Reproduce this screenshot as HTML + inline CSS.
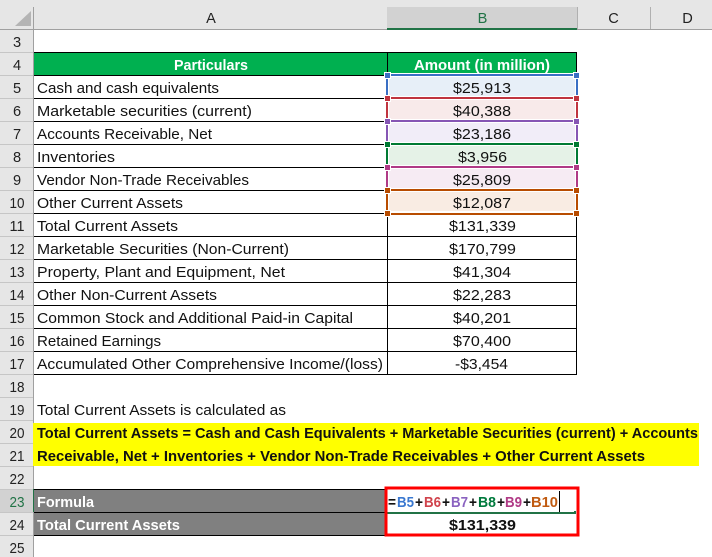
<!DOCTYPE html>
<html><head><meta charset="utf-8"><style>
html,body{margin:0;padding:0;background:#fff;width:712px;height:557px;overflow:hidden}
svg{display:block}
text{font-family:"Liberation Sans",sans-serif;font-size:14.6px;fill:#111}
.b{font-weight:700}
.w{fill:#fff;font-weight:700}
.h{fill:#222;text-anchor:middle}
</style></head><body>
<svg xmlns="http://www.w3.org/2000/svg" width="712" height="557" viewBox="0 0 712 557" shape-rendering="crispEdges">
<!-- headers -->
<rect x="0" y="0" width="712" height="29" fill="#e6e6e6"/>
<rect x="0" y="0" width="33" height="557" fill="#e6e6e6"/>
<rect x="387" y="7" width="190" height="21" fill="#d2d2d2"/>
<rect x="0" y="29" width="712" height="1" fill="#a0a0a0"/>
<rect x="387" y="28" width="190" height="2" fill="#217346"/>
<rect x="33" y="7" width="1" height="550" fill="#a0a0a0"/>
<rect x="650" y="7" width="1" height="22" fill="#b0b0b0"/>
<rect x="577" y="7" width="1" height="22" fill="#b0b0b0"/>
<polygon points="31,11 31,26 15,26" fill="#b4b4b4" shape-rendering="auto"/>
<rect x="0" y="489" width="33" height="23" fill="#d2d2d2"/>
<rect x="33" y="489" width="2" height="23" fill="#217346"/>
<g fill="#c6c6c6">
<rect x="0" y="52" width="33" height="1"/><rect x="0" y="75" width="33" height="1"/><rect x="0" y="98" width="33" height="1"/><rect x="0" y="121" width="33" height="1"/><rect x="0" y="144" width="33" height="1"/><rect x="0" y="167" width="33" height="1"/><rect x="0" y="190" width="33" height="1"/><rect x="0" y="213" width="33" height="1"/><rect x="0" y="236" width="33" height="1"/><rect x="0" y="259" width="33" height="1"/><rect x="0" y="282" width="33" height="1"/><rect x="0" y="305" width="33" height="1"/><rect x="0" y="328" width="33" height="1"/><rect x="0" y="351" width="33" height="1"/><rect x="0" y="374" width="33" height="1"/><rect x="0" y="397" width="33" height="1"/><rect x="0" y="420" width="33" height="1"/><rect x="0" y="443" width="33" height="1"/><rect x="0" y="466" width="33" height="1"/><rect x="0" y="489" width="33" height="1"/><rect x="0" y="512" width="33" height="1"/><rect x="0" y="535" width="33" height="1"/>
</g>
<g shape-rendering="auto">
<text class="h" x="211" y="23">A</text><text class="h" x="482.5" y="23" style="fill:#217346">B</text><text class="h" x="613.5" y="23">C</text><text class="h" x="687.5" y="23">D</text>
<text class="h" x="17" y="47">3</text><text class="h" x="17" y="70">4</text><text class="h" x="17" y="93">5</text><text class="h" x="17" y="116">6</text><text class="h" x="17" y="139">7</text><text class="h" x="17" y="162">8</text><text class="h" x="17" y="185">9</text>
<text class="h" x="17" y="208" textLength="15" lengthAdjust="spacingAndGlyphs">10</text><text class="h" x="17" y="231" textLength="15" lengthAdjust="spacingAndGlyphs">11</text><text class="h" x="17" y="254" textLength="15" lengthAdjust="spacingAndGlyphs">12</text><text class="h" x="17" y="277" textLength="15" lengthAdjust="spacingAndGlyphs">13</text><text class="h" x="17" y="300" textLength="15" lengthAdjust="spacingAndGlyphs">14</text><text class="h" x="17" y="323" textLength="15" lengthAdjust="spacingAndGlyphs">15</text><text class="h" x="17" y="346" textLength="15" lengthAdjust="spacingAndGlyphs">16</text><text class="h" x="17" y="369" textLength="15" lengthAdjust="spacingAndGlyphs">17</text><text class="h" x="17" y="392" textLength="15" lengthAdjust="spacingAndGlyphs">18</text><text class="h" x="17" y="415" textLength="15" lengthAdjust="spacingAndGlyphs">19</text><text class="h" x="17" y="438" textLength="15" lengthAdjust="spacingAndGlyphs">20</text><text class="h" x="17" y="461" textLength="15" lengthAdjust="spacingAndGlyphs">21</text><text class="h" x="17" y="484" textLength="15" lengthAdjust="spacingAndGlyphs">22</text><text class="h" x="17" y="507" textLength="15" lengthAdjust="spacingAndGlyphs" style="fill:#217346">23</text><text class="h" x="17" y="530" textLength="15" lengthAdjust="spacingAndGlyphs">24</text><text class="h" x="17" y="553" textLength="15" lengthAdjust="spacingAndGlyphs">25</text>
</g>
<!-- table -->
<rect x="34" y="52" width="543" height="23" fill="#00b050"/>
<g fill="#000">
<rect x="34" y="52" width="543" height="1"/><rect x="34" y="75" width="543" height="1"/><rect x="34" y="98" width="543" height="1"/><rect x="34" y="121" width="543" height="1"/><rect x="34" y="144" width="543" height="1"/><rect x="34" y="167" width="543" height="1"/><rect x="34" y="190" width="543" height="1"/><rect x="34" y="213" width="543" height="1"/><rect x="34" y="236" width="543" height="1"/><rect x="34" y="259" width="543" height="1"/><rect x="34" y="282" width="543" height="1"/><rect x="34" y="305" width="543" height="1"/><rect x="34" y="328" width="543" height="1"/><rect x="34" y="351" width="543" height="1"/><rect x="34" y="374" width="543" height="1"/>
<rect x="387" y="52" width="1" height="322"/><rect x="576" y="52" width="1" height="323"/>
</g>
<!-- coloured reference boxes -->
<g>
<rect x="385" y="73" width="194" height="142" fill="#fff"/>
<rect x="389" y="77" width="186" height="19" fill="#e7eff8"/>
<rect x="389" y="100" width="186" height="19" fill="#f8eaea"/>
<rect x="389" y="123" width="186" height="19" fill="#f1edf8"/>
<rect x="389" y="146" width="186" height="19" fill="#e5f2e7"/>
<rect x="389" y="169" width="186" height="19" fill="#f6ebf3"/>
<rect x="389" y="192" width="186" height="19" fill="#f9ece3"/>
<rect x="386" y="75" width="2" height="23" fill="#3a6fc4"/><rect x="576" y="75" width="2" height="23" fill="#3a6fc4"/>
<rect x="386" y="98" width="2" height="23" fill="#c0343f"/><rect x="576" y="98" width="2" height="23" fill="#c0343f"/>
<rect x="386" y="121" width="2" height="23" fill="#8656b4"/><rect x="576" y="121" width="2" height="23" fill="#8656b4"/>
<rect x="386" y="144" width="2" height="23" fill="#007a33"/><rect x="576" y="144" width="2" height="23" fill="#007a33"/>
<rect x="386" y="167" width="2" height="23" fill="#b03a86"/><rect x="576" y="167" width="2" height="23" fill="#b03a86"/>
<rect x="386" y="190" width="2" height="23" fill="#b84c00"/><rect x="576" y="190" width="2" height="23" fill="#b84c00"/>
<rect x="387" y="74" width="190" height="2" fill="#3a6fc4"/>
<rect x="387" y="97" width="190" height="2" fill="#c0343f"/>
<rect x="387" y="120" width="190" height="2" fill="#8656b4"/>
<rect x="387" y="143" width="190" height="2" fill="#007a33"/>
<rect x="387" y="166" width="190" height="2" fill="#b03a86"/>
<rect x="387" y="189" width="190" height="2" fill="#b84c00"/>
<rect x="387" y="213" width="190" height="2" fill="#b84c00"/>
<g stroke="#fff" stroke-width="1">
<rect x="384.5" y="72.5" width="6" height="6" fill="#3a6fc4"/><rect x="573.5" y="72.5" width="6" height="6" fill="#3a6fc4"/>
<rect x="384.5" y="95.5" width="6" height="6" fill="#c0343f"/><rect x="573.5" y="95.5" width="6" height="6" fill="#c0343f"/>
<rect x="384.5" y="118.5" width="6" height="6" fill="#8656b4"/><rect x="573.5" y="118.5" width="6" height="6" fill="#8656b4"/>
<rect x="384.5" y="141.5" width="6" height="6" fill="#007a33"/><rect x="573.5" y="141.5" width="6" height="6" fill="#007a33"/>
<rect x="384.5" y="164.5" width="6" height="6" fill="#b03a86"/><rect x="573.5" y="164.5" width="6" height="6" fill="#b03a86"/>
<rect x="384.5" y="187.5" width="6" height="6" fill="#b84c00"/><rect x="573.5" y="187.5" width="6" height="6" fill="#b84c00"/>
<rect x="384.5" y="210.5" width="6" height="6" fill="#b84c00"/><rect x="573.5" y="210.5" width="6" height="6" fill="#b84c00"/>
</g>
</g>
<!-- yellow -->
<rect x="33" y="423" width="666" height="43" fill="#ffff00"/>
<!-- grey formula -->
<rect x="34" y="489" width="352" height="46" fill="#808080"/>
<rect x="34" y="489" width="352" height="1" fill="#000"/><rect x="34" y="512" width="352" height="1" fill="#000"/><rect x="34" y="535" width="352" height="1" fill="#000"/>
<rect x="387" y="512" width="188" height="2" fill="#217346"/><rect x="574" y="511" width="2" height="3" fill="#217346"/>
<rect x="559" y="491" width="1" height="21" fill="#000"/>
<rect x="386" y="488" width="192" height="47" fill="none" stroke="#ff0000" stroke-width="3"/>
<g shape-rendering="auto">
<text class="w" x="174" y="70" textLength="74" lengthAdjust="spacingAndGlyphs">Particulars</text>
<text class="w" x="414" y="70" textLength="136" lengthAdjust="spacingAndGlyphs">Amount (in million)</text>
<text x="37" y="93" textLength="182" lengthAdjust="spacingAndGlyphs">Cash and cash equivalents</text>
<text x="37" y="116" textLength="215" lengthAdjust="spacingAndGlyphs">Marketable securities (current)</text>
<text x="37" y="139" textLength="175" lengthAdjust="spacingAndGlyphs">Accounts Receivable, Net</text>
<text x="37" y="162" textLength="78" lengthAdjust="spacingAndGlyphs">Inventories</text>
<text x="37" y="185" textLength="212" lengthAdjust="spacingAndGlyphs">Vendor Non-Trade Receivables</text>
<text x="37" y="208" textLength="146" lengthAdjust="spacingAndGlyphs">Other Current Assets</text>
<text x="37" y="231" textLength="141" lengthAdjust="spacingAndGlyphs">Total Current Assets</text>
<text x="37" y="254" textLength="252" lengthAdjust="spacingAndGlyphs">Marketable Securities (Non-Current)</text>
<text x="37" y="277" textLength="248" lengthAdjust="spacingAndGlyphs">Property, Plant and Equipment, Net</text>
<text x="37" y="300" textLength="180" lengthAdjust="spacingAndGlyphs">Other Non-Current Assets</text>
<text x="37" y="323" textLength="316" lengthAdjust="spacingAndGlyphs">Common Stock and Additional Paid-in Capital</text>
<text x="37" y="346" textLength="124" lengthAdjust="spacingAndGlyphs">Retained Earnings</text>
<text x="37" y="369" textLength="346" lengthAdjust="spacingAndGlyphs">Accumulated Other Comprehensive Income/(loss)</text>
<text x="453" y="93" textLength="58" lengthAdjust="spacingAndGlyphs">$25,913</text>
<text x="453" y="116" textLength="58" lengthAdjust="spacingAndGlyphs">$40,388</text>
<text x="453" y="139" textLength="58" lengthAdjust="spacingAndGlyphs">$23,186</text>
<text x="458" y="162" textLength="49" lengthAdjust="spacingAndGlyphs">$3,956</text>
<text x="453" y="185" textLength="58" lengthAdjust="spacingAndGlyphs">$25,809</text>
<text x="453" y="208" textLength="58" lengthAdjust="spacingAndGlyphs">$12,087</text>
<text x="449" y="231" textLength="67" lengthAdjust="spacingAndGlyphs">$131,339</text>
<text x="449" y="254" textLength="67" lengthAdjust="spacingAndGlyphs">$170,799</text>
<text x="453" y="277" textLength="58" lengthAdjust="spacingAndGlyphs">$41,304</text>
<text x="453" y="300" textLength="58" lengthAdjust="spacingAndGlyphs">$22,283</text>
<text x="453" y="323" textLength="58" lengthAdjust="spacingAndGlyphs">$40,201</text>
<text x="453" y="346" textLength="58" lengthAdjust="spacingAndGlyphs">$70,400</text>
<text x="455" y="369" textLength="53" lengthAdjust="spacingAndGlyphs">-$3,454</text>
<text x="37" y="415" textLength="249" lengthAdjust="spacingAndGlyphs">Total Current Assets is calculated as</text>
<text class="b" x="37" y="438" textLength="661" lengthAdjust="spacingAndGlyphs">Total Current Assets = Cash and Cash Equivalents + Marketable Securities (current) + Accounts</text>
<text class="b" x="37" y="461" textLength="608" lengthAdjust="spacingAndGlyphs">Receivable, Net + Inventories + Vendor Non-Trade Receivables + Other Current Assets</text>
<text class="w" x="37" y="507" textLength="57" lengthAdjust="spacingAndGlyphs">Formula</text>
<text class="w" x="37" y="530" textLength="143" lengthAdjust="spacingAndGlyphs">Total Current Assets</text>
<text class="b" x="449" y="530" textLength="67" lengthAdjust="spacingAndGlyphs">$131,339</text>
<text class="b" x="388" y="507" textLength="8" lengthAdjust="spacingAndGlyphs">=</text>
<text class="b" x="397" y="507" textLength="17" lengthAdjust="spacingAndGlyphs" style="fill:#3a78d0">B5</text>
<text class="b" x="415" y="507" textLength="8" lengthAdjust="spacingAndGlyphs">+</text>
<text class="b" x="424" y="507" textLength="17" lengthAdjust="spacingAndGlyphs" style="fill:#d0434c">B6</text>
<text class="b" x="442" y="507" textLength="8" lengthAdjust="spacingAndGlyphs">+</text>
<text class="b" x="451" y="507" textLength="17" lengthAdjust="spacingAndGlyphs" style="fill:#8a62c0">B7</text>
<text class="b" x="469" y="507" textLength="8" lengthAdjust="spacingAndGlyphs">+</text>
<text class="b" x="478" y="507" textLength="18" lengthAdjust="spacingAndGlyphs" style="fill:#007a3d">B8</text>
<text class="b" x="497" y="507" textLength="8" lengthAdjust="spacingAndGlyphs">+</text>
<text class="b" x="505" y="507" textLength="17" lengthAdjust="spacingAndGlyphs" style="fill:#b03a86">B9</text>
<text class="b" x="523" y="507" textLength="8" lengthAdjust="spacingAndGlyphs">+</text>
<text class="b" x="531" y="507" textLength="27" lengthAdjust="spacingAndGlyphs" style="fill:#c05a10">B10</text>
</g>
</svg>
</body></html>
